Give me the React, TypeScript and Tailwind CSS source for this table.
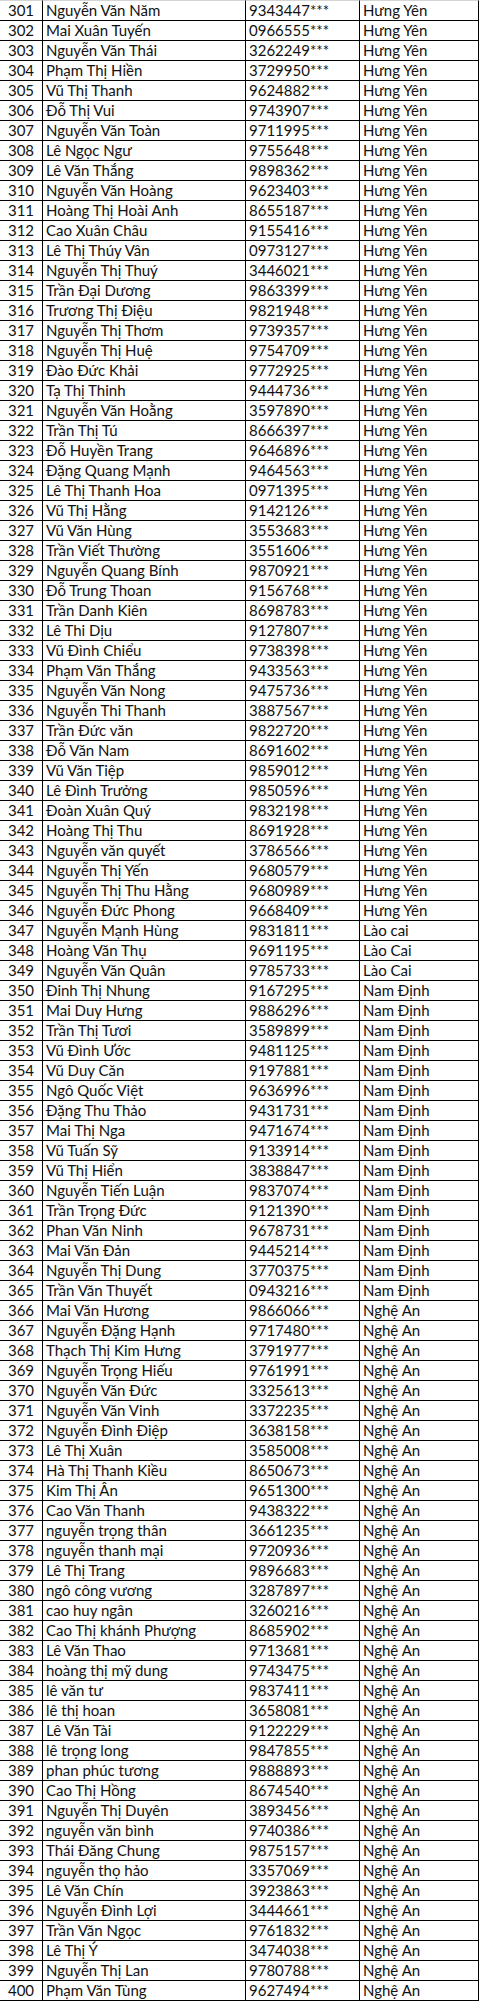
import React from "react";

// số thứ tự bắt đầu từ 301
const rows: [string, string, string][] = [
  ["Nguyễn Văn Năm", "9343447", "Hưng Yên"],
  ["Mai Xuân Tuyến", "0966555", "Hưng Yên"],
  ["Nguyễn Văn Thái", "3262249", "Hưng Yên"],
  ["Phạm Thị Hiền", "3729950", "Hưng Yên"],
  ["Vũ Thị Thanh", "9624882", "Hưng Yên"],
  ["Đỗ Thị Vui", "9743907", "Hưng Yên"],
  ["Nguyễn Văn Toàn", "9711995", "Hưng Yên"],
  ["Lê Ngọc Ngư", "9755648", "Hưng Yên"],
  ["Lê Văn Thắng", "9898362", "Hưng Yên"],
  ["Nguyễn Văn Hoàng", "9623403", "Hưng Yên"],
  ["Hoàng Thị Hoài Anh", "8655187", "Hưng Yên"],
  ["Cao Xuân Châu", "9155416", "Hưng Yên"],
  ["Lê Thị Thúy Vân", "0973127", "Hưng Yên"],
  ["Nguyễn Thị Thuý", "3446021", "Hưng Yên"],
  ["Trần Đại Dương", "9863399", "Hưng Yên"],
  ["Trương Thị Điệu", "9821948", "Hưng Yên"],
  ["Nguyễn Thị Thơm", "9739357", "Hưng Yên"],
  ["Nguyễn Thị Huệ", "9754709", "Hưng Yên"],
  ["Đào Đức Khải", "9772925", "Hưng Yên"],
  ["Tạ Thị Thinh", "9444736", "Hưng Yên"],
  ["Nguyễn Văn Hoằng", "3597890", "Hưng Yên"],
  ["Trần Thị Tú", "8666397", "Hưng Yên"],
  ["Đỗ Huyền Trang", "9646896", "Hưng Yên"],
  ["Đặng Quang Mạnh", "9464563", "Hưng Yên"],
  ["Lê Thị Thanh Hoa", "0971395", "Hưng Yên"],
  ["Vũ Thị Hằng", "9142126", "Hưng Yên"],
  ["Vũ Văn Hùng", "3553683", "Hưng Yên"],
  ["Trần Viết Thường", "3551606", "Hưng Yên"],
  ["Nguyễn Quang Bính", "9870921", "Hưng Yên"],
  ["Đỗ Trung Thoan", "9156768", "Hưng Yên"],
  ["Trần Danh Kiên", "8698783", "Hưng Yên"],
  ["Lê Thi Dịu", "9127807", "Hưng Yên"],
  ["Vũ Đình Chiểu", "9738398", "Hưng Yên"],
  ["Phạm Văn Thắng", "9433563", "Hưng Yên"],
  ["Nguyễn Văn Nong", "9475736", "Hưng Yên"],
  ["Nguyễn Thi Thanh", "3887567", "Hưng Yên"],
  ["Trần Đức văn", "9822720", "Hưng Yên"],
  ["Đỗ Văn Nam", "8691602", "Hưng Yên"],
  ["Vũ Văn Tiệp", "9859012", "Hưng Yên"],
  ["Lê Đình Trưởng", "9850596", "Hưng Yên"],
  ["Đoàn Xuân Quý", "9832198", "Hưng Yên"],
  ["Hoàng Thị Thu", "8691928", "Hưng Yên"],
  ["Nguyễn văn quyết", "3786566", "Hưng Yên"],
  ["Nguyễn Thị Yến", "9680579", "Hưng Yên"],
  ["Nguyễn Thị Thu Hằng", "9680989", "Hưng Yên"],
  ["Nguyễn Đức Phong", "9668409", "Hưng Yên"],
  ["Nguyễn Mạnh Hùng", "9831811", "Lào cai"],
  ["Hoàng Văn Thụ", "9691195", "Lào Cai"],
  ["Nguyễn Văn Quân", "9785733", "Lào Cai"],
  ["Đinh Thị Nhung", "9167295", "Nam Định"],
  ["Mai Duy Hưng", "9886296", "Nam Định"],
  ["Trần Thị Tươi", "3589899", "Nam Định"],
  ["Vũ Đình Ước", "9481125", "Nam Định"],
  ["Vũ Duy Căn", "9197881", "Nam Định"],
  ["Ngô Quốc Việt", "9636996", "Nam Định"],
  ["Đặng Thu Thảo", "9431731", "Nam Định"],
  ["Mai Thị Nga", "9471674", "Nam Định"],
  ["Vũ Tuấn Sỹ", "9133914", "Nam Định"],
  ["Vũ Thị Hiển", "3838847", "Nam Định"],
  ["Nguyễn Tiến Luận", "9837074", "Nam Định"],
  ["Trần Trọng Đức", "9121390", "Nam Định"],
  ["Phan Văn Ninh", "9678731", "Nam Định"],
  ["Mai Văn Đản", "9445214", "Nam Định"],
  ["Nguyễn Thị Dung", "3770375", "Nam Định"],
  ["Trần Văn Thuyết", "0943216", "Nam Định"],
  ["Mai Văn Hương", "9866066", "Nghệ An"],
  ["Nguyễn Đặng Hạnh", "9717480", "Nghệ An"],
  ["Thạch Thị Kim Hưng", "3791977", "Nghệ An"],
  ["Nguyễn Trọng Hiếu", "9761991", "Nghệ An"],
  ["Nguyễn Văn Đức", "3325613", "Nghệ An"],
  ["Nguyễn Văn Vinh", "3372235", "Nghệ An"],
  ["Nguyễn Đình Điệp", "3638158", "Nghệ An"],
  ["Lê Thị Xuân", "3585008", "Nghệ An"],
  ["Hà Thị Thanh Kiều", "8650673", "Nghệ An"],
  ["Kim Thị Ân", "9651300", "Nghệ An"],
  ["Cao Văn Thanh", "9438322", "Nghệ An"],
  ["nguyễn trọng thân", "3661235", "Nghệ An"],
  ["nguyễn thanh mại", "9720936", "Nghệ An"],
  ["Lê Thị Trang", "9896683", "Nghệ An"],
  ["ngô công vương", "3287897", "Nghệ An"],
  ["cao huy ngân", "3260216", "Nghệ An"],
  ["Cao Thị khánh Phượng", "8685902", "Nghệ An"],
  ["Lê Văn Thao", "9713681", "Nghệ An"],
  ["hoàng thị mỹ dung", "9743475", "Nghệ An"],
  ["lê văn tư", "9837411", "Nghệ An"],
  ["lê thị hoan", "3658081", "Nghệ An"],
  ["Lê Văn Tài", "9122229", "Nghệ An"],
  ["lê trọng long", "9847855", "Nghệ An"],
  ["phan phúc tương", "9888893", "Nghệ An"],
  ["Cao Thị Hồng", "8674540", "Nghệ An"],
  ["Nguyễn Thị Duyên", "3893456", "Nghệ An"],
  ["nguyễn văn bình", "9740386", "Nghệ An"],
  ["Thái Đăng Chung", "9875157", "Nghệ An"],
  ["nguyễn thọ hảo", "3357069", "Nghệ An"],
  ["Lê Văn Chín", "3923863", "Nghệ An"],
  ["Nguyễn Đình Lợi", "3444661", "Nghệ An"],
  ["Trần Văn Ngọc", "9761832", "Nghệ An"],
  ["Lê Thị Ý", "3474038", "Nghệ An"],
  ["Nguyễn Thị Lan", "9780788", "Nghệ An"],
  ["Phạm Văn Tùng", "9627494", "Nghệ An"],
];

const cell = "h-5 border-t border-r border-black flex items-end pb-[2px] leading-[16px] whitespace-nowrap overflow-hidden";

export default function App() {
  return (
    <div className="bg-white w-[481px] font-['Lato','Liberation_Sans',sans-serif] text-[15px] text-[#111]">
      <div className="grid grid-cols-[43px_203px_114px_119px] border-b border-black w-[479px]">
        {rows.map(([name, phone, place], i) => (
          <React.Fragment key={i}>
            <div className={`${cell} justify-center ${i === 0 ? "border-t-[#d4d4d4]" : ""}`}>{301 + i}</div>
            <div className={`${cell} pl-[3px] ${i === 0 ? "border-t-[#d4d4d4]" : ""}`}>{name}</div>
            <div className={`${cell} pl-[3px] ${i === 0 ? "border-t-[#d4d4d4]" : ""}`}>{phone}***</div>
            <div className={`${cell} pl-[3px] ${i === 0 ? "border-t-[#d4d4d4]" : ""}`}>{place}</div>
          </React.Fragment>
        ))}
      </div>
    </div>
  );
}
